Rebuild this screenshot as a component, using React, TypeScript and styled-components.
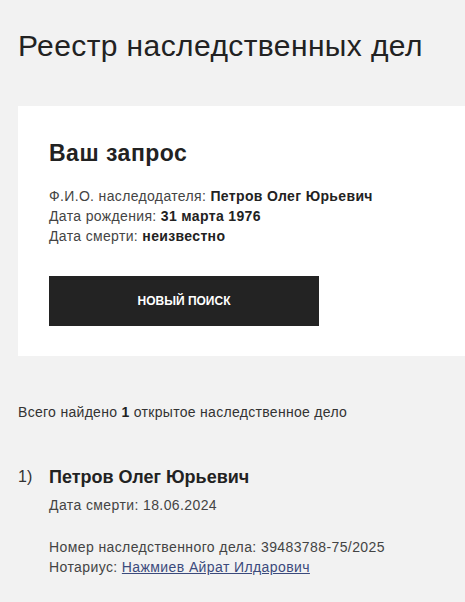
import * as React from 'react';
import styled, { createGlobalStyle } from 'styled-components';

const GlobalStyle = createGlobalStyle`
  html, body {
    margin: 0;
    padding: 0;
    background: #f2f2f2;
  }
  body {
    font-family: "Liberation Sans", Arial, sans-serif;
    color: #222;
  }
`;

const Page = styled.div`
  padding: 26px 0 0 18px;
  min-height: 602px;
  box-sizing: border-box;
`;

const Title = styled.h1`
  margin: 0;
  font-size: 30px;
  line-height: 40px;
  font-weight: 400;
  letter-spacing: 0.4px;
  color: #222;
`;

const Card = styled.section`
  margin-top: 40px;
  background: #fff;
  padding: 33px 0 30px 31px;
`;

const CardTitle = styled.h2`
  margin: 0;
  font-size: 23px;
  line-height: 28px;
  font-weight: 600;
  letter-spacing: 0.5px;
  color: #222;
`;

const InfoList = styled.div`
  margin-top: 19px;
  display: flex;
  flex-direction: column;
`;

const Line = styled.div`
  font-size: 14px;
  line-height: 20px;
  letter-spacing: 0.35px;
  color: #444;
`;

const Value = styled.b`
  font-weight: 700;
  color: #222;
`;

const Button = styled.button`
  margin-top: 30px;
  width: 270px;
  height: 50px;
  border: none;
  background: #232323;
  color: #fff;
  font-family: inherit;
  font-size: 12px;
  font-weight: 700;
  text-transform: uppercase;
  cursor: pointer;
`;

const Summary = styled.p`
  margin: 46px 0 0;
  font-size: 14px;
  line-height: 20px;
  letter-spacing: 0.3px;
  color: #333;
`;

const Results = styled.ol`
  list-style: none;
  margin: 43px 0 0;
  padding: 0;
`;

const Item = styled.li`
  display: grid;
  grid-template-columns: 31px 1fr;
`;

const Num = styled.span`
  font-size: 16px;
  line-height: 24px;
  color: #333;
`;

const Body = styled.div`
  display: flex;
  flex-direction: column;
`;

const Name = styled.div`
  font-size: 18px;
  line-height: 24px;
  font-weight: 700;
  color: #222;
`;

const Meta = styled.div<{ gap?: number }>`
  margin-top: ${({ gap }) => gap ?? 0}px;
  font-size: 14px;
  line-height: 20px;
  letter-spacing: 0.4px;
  color: #444;
`;

const Link = styled.a`
  color: #3b4a7c;
  text-decoration: underline;
`;

export default function App() {
  return (
    <>
      <GlobalStyle />
      <Page>
        <Title>Реестр наследственных дел</Title>
        <Card>
          <CardTitle>Ваш запрос</CardTitle>
          <InfoList>
            <Line>Ф.И.О. наследодателя: <Value>Петров Олег Юрьевич</Value></Line>
            <Line>Дата рождения: <Value>31 марта 1976</Value></Line>
            <Line>Дата смерти: <Value>неизвестно</Value></Line>
          </InfoList>
          <Button>Новый поиск</Button>
        </Card>
        <Summary>Всего найдено <Value>1</Value> открытое наследственное дело</Summary>
        <Results>
          <Item>
            <Num>1)</Num>
            <Body>
              <Name>Петров Олег Юрьевич</Name>
              <Meta gap={6}>Дата смерти: 18.06.2024</Meta>
              <Meta gap={22}>Номер наследственного дела: 39483788-75/2025</Meta>
              <Meta>Нотариус: <Link href="#">Нажмиев Айрат Илдарович</Link></Meta>
            </Body>
          </Item>
        </Results>
      </Page>
    </>
  );
}
